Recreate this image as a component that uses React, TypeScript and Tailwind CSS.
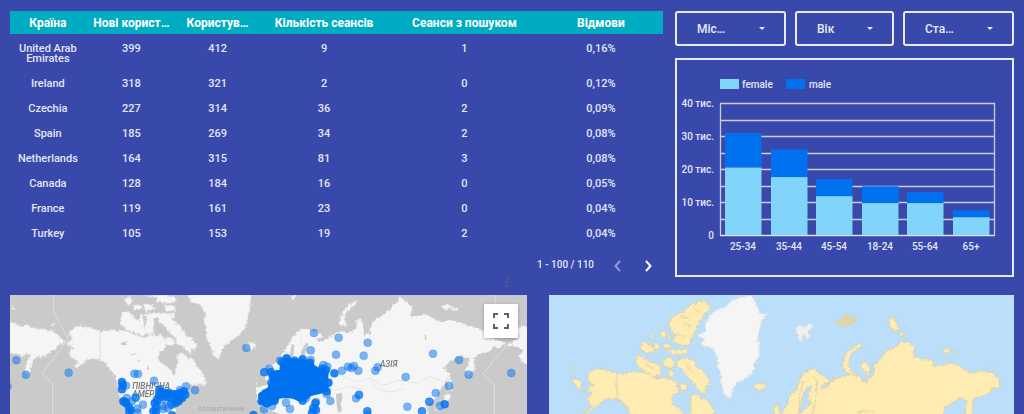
import React from "react";

const columns = [
  { label: "Країна", width: "w-[11.6%]" },
  { label: "Нові корист…", width: "w-[14%]" },
  { label: "Користув…", width: "w-[12.4%]" },
  { label: "Кількість сеансів", width: "w-[20.2%]" },
  { label: "Сеанси з пошуком", width: "w-[22.8%]" },
  { label: "Відмови", width: "w-[19%]" },
];

const rows = [
  ["United Arab Emirates", "399", "412", "9", "1", "0,16%"],
  ["Ireland", "318", "321", "2", "0", "0,12%"],
  ["Czechia", "227", "314", "36", "2", "0,09%"],
  ["Spain", "185", "269", "34", "2", "0,08%"],
  ["Netherlands", "164", "315", "81", "3", "0,08%"],
  ["Canada", "128", "184", "16", "0", "0,05%"],
  ["France", "119", "161", "23", "0", "0,04%"],
  ["Turkey", "105", "153", "19", "2", "0,04%"],
];

function CountryTable() {
  return (
    <section>
      <table className="w-full table-fixed border-collapse text-center text-[#e4e6f4]">
        <thead>
          <tr className="h-[23px] bg-[#00acc1]">
            {columns.map((c) => (
              <th key={c.label} className={`${c.width} whitespace-nowrap p-0 text-xs font-bold leading-4 text-white`}>
                {c.label}
              </th>
            ))}
          </tr>
        </thead>
        <tbody>
          {rows.map((row) => (
            <tr key={row[0]}>
              {row.map((cell, i) => (
                <td key={i} className="px-1 pb-[5px] pt-[10px] align-top text-[11px] font-medium leading-[10px]">
                  {cell}
                </td>
              ))}
            </tr>
          ))}
        </tbody>
      </table>
      <div className="mt-[13px] flex items-center justify-end pr-[7px] text-[10px] font-medium leading-4 text-[#e4e6f4]">
        <span className="mr-4">1 - 100 / 110</span>
        <button type="button" aria-label="Назад" disabled className="mr-[14px] text-[#8f99d6]">
          <Chevron d="M10 4 5.5 9l4.5 5" />
        </button>
        <button type="button" aria-label="Далі" className="text-white">
          <Chevron d="m6 4 4.5 5L6 14" />
        </button>
      </div>
    </section>
  );
}

function Chevron({ d }: { d: string }) {
  return (
    <svg viewBox="0 0 16 16" className="size-4" fill="none" stroke="currentColor" strokeWidth="2">
      <path d={d} />
    </svg>
  );
}

function Filter({ label, name }: { label: string; name: string }) {
  return (
    <div className="relative">
      <select
        aria-label={name}
        className="h-[35px] w-full appearance-none rounded-[3px] border-2 border-[#e8eaf6] bg-transparent pl-5 pr-8 text-xs font-medium text-[#e8eaf6]"
      >
        <option>{label}</option>
      </select>
      <svg viewBox="0 0 6 3" className="pointer-events-none absolute right-[21px] top-4 h-[3px] w-[6px]" fill="#e8eaf6">
        <path d="M0 0h6L3 3z" />
      </svg>
    </div>
  );
}

const ages = [
  { label: "25-34", x: 48, female: 20.5, total: 31 },
  { label: "35-44", x: 94, female: 17.6, total: 26 },
  { label: "45-54", x: 139, female: 11.8, total: 17 },
  { label: "18-24", x: 185, female: 9.7, total: 14.8 },
  { label: "55-64", x: 230, female: 9.7, total: 13 },
  { label: "65+", x: 276, female: 5.4, total: 7.5 },
];
const baseY = 175;
const perUnit = 3.29;

function AgeChart() {
  return (
    <section className="mt-3 border-2 border-[#e8eaf6]">
      <svg viewBox="0 0 335 215" className="block w-full font-medium" fill="#e4e6f4" fontSize="10">
        <rect x="43" y="19" width="19" height="10" fill="#81d4fa" />
        <text x="65" y="28">female</text>
        <rect x="109" y="19" width="19" height="10" fill="#0072f0" />
        <text x="132" y="28">male</text>
        <g stroke="#cbcddf" strokeWidth="1.3">
          {[0, 5, 10, 15, 20, 25, 30, 35, 40].map((v) => (
            <path key={v} d={`M43 ${Math.round(baseY - v * perUnit) + 0.5}H318`} />
          ))}
          <path d="M43.5 43V175M317.5 43V175" />
        </g>
        {[0, 10, 20, 30, 40].map((v) => (
          <text key={v} x="37" y={baseY - v * perUnit + 4} textAnchor="end">
            {v === 0 ? "0" : `${v} тис.`}
          </text>
        ))}
        {ages.map((a) => (
          <g key={a.label}>
            <rect x={a.x} y={baseY - a.total * perUnit} width="36.5" height={(a.total - a.female) * perUnit} fill="#0072f0" />
            <rect x={a.x} y={baseY - a.female * perUnit} width="36.5" height={a.female * perUnit} fill="#81d4fa" />
            <text x={a.x + 18} y="190" textAnchor="middle">{a.label}</text>
          </g>
        ))}
        <path d="M43 175.5H318" stroke="#dfe1ee" shapeRendering="crispEdges" />
      </svg>
    </section>
  );
}

const westDots = [
  [49, 229], [78, 272], [206, 266], [403, 269], [414, 270], [462, 290], [558, 307], [585, 319], [739, 192],
  [792, 265], [22, 307], [378, 305], [429, 362], [407, 340], [407, 342], [396, 352], [412, 374], [380, 342],
  [540, 318], [512, 362], [498, 350], [486, 366], [504, 372], [516, 362], [470, 345], [490, 375], [412, 386],
];
const westSolid = [
  [366, 294], [368, 304], [366, 316], [370, 352], [378, 358], [386, 368], [392, 378], [376, 354], [388, 384],
  [478, 317], [484, 324], [496, 328], [506, 326], [518, 330], [530, 330], [542, 326], [552, 322], [556, 332],
  [546, 342], [536, 352], [526, 358], [514, 342], [500, 338], [486, 338], [472, 350], [464, 358], [468, 370],
  [460, 382], [540, 338], [526, 344], [478, 334], [760, 393], [516, 394], [468, 384],
];
const eastDots = [
  [162, 147], [236, 161], [323, 176], [152, 199], [228, 212], [311, 215], [519, 209], [597, 228], [626, 272],
  [754, 267], [437, 279], [567, 306], [527, 327], [442, 368], [540, 366], [246, 260], [264, 248], [282, 246],
  [274, 252], [295, 260], [346, 260], [353, 250], [297, 332], [297, 334], [288, 343], [211, 351], [90, 375],
  [78, 356], [14, 265], [28, 254], [60, 230], [80, 222], [152, 228], [190, 243], [202, 248], [168, 354], [12, 376],
  [200, 330], [206, 296], [150, 240], [508, 353], [508, 353], [486, 382], [486, 382], [322, 382], [322, 382], [322, 392],
  [36, 366], [138, 342],
];
const eastSolid = [
  [554, 361], [223, 268], [80, 224], [104, 230], [128, 226], [66, 234], [150, 236], [186, 254], [198, 258],
  [32, 264], [38, 276], [34, 296], [204, 296], [200, 322], [166, 358], [160, 372], [168, 378], [156, 386],
  [128, 350], [20, 358], [4, 352], [6, 336], [16, 328], [28, 324], [44, 350],
];

function Dots({ points, opacity }: { points: number[][]; opacity: number }) {
  return (
    <g fill="#0072f0" fillOpacity={opacity} stroke="#0072f0" strokeOpacity={opacity * 0.7} strokeWidth="2">
      {points.map(([x, y], i) => (
        <circle key={i} cx={x} cy={y} r="12" />
      ))}
    </g>
  );
}

function CoastFilter({ id, scale }: { id: string; scale: number }) {
  return (
    <filter id={id} x="-5%" y="-5%" width="110%" height="110%">
      <feTurbulence type="fractalNoise" baseFrequency="0.12" numOctaves="2" seed="4" />
      <feDisplacementMap in="SourceGraphic" scale={scale} xChannelSelector="R" yChannelSelector="G" />
    </filter>
  );
}

function VisitorsMap() {
  return (
    <section className="relative overflow-hidden">
      <svg viewBox="30 33 1551 357" className="block w-full overflow-hidden bg-[#cacaca]" role="img" aria-label="Карта сеансів">
        <defs>
          <CoastFilter id="coast-grey" scale={14} />
        </defs>
        <g filter="url(#coast-grey)" fill="#f5f5f5">
          <path d="M20 110l22 6 6 8 18 3 16-5 13 9 23 3 32 5 10 3 15 13 10 10 10 7-7 10-10-4-10 14-13 6-10 14-15 4-10 6-5-8-15 14-8 20-5 28-12-12 2-28 15-18-7-10-18 10-15-10H20z" />
          <path d="M150 124l10-5 6 4-8 5zM34 70l10 0 4 7-10 0z" />
          <path d="M208 140l17-10 15-5 15 3 20 4 15 6 10 4 20-2 20-4 12 6 13-4 15 4 20 8 20 8 20 2 15-10 15 8 10-8 12 10 8 18-8 17-12 10-6 17 6 13 17 8 15 15 6 14 9-2-1-20 8-15-3-20 13-10 13 7 7 13 13-3 12 23 15 17 13 23-18 15-15 2-15 3-10 20-15 20-15 25-10 40H385l-10-40-15-30-8-40-7-25-15-20-18-23-22-8-20 1-20 10-17 17-12-2 17-18-18-7-10-10-2-15 15-10-15-5-10-5 12-12 10-3-12-10z" />
          <path d="M600 302l8-16 14 12-2 7zM365 85l20-2 14 14 16 13 8-22 10 24-3 18 16 12-15 13-22-8-24-8-23-18zM435 128l8-26 14-8 6 20-2 32-14 6zM470 90l30 5 20 15 25 20 10 20 20 15 15 15-5 20-15-5 5 16-15-10-15-16-15-4-5-20-15-15-15-20-15-10zM498 160l16 0 12 16-12 10-16-8zM372 44l18-6 8 18-14 8zM398 66l20-6 10 12-24 8zM428 62l26 0 14 12-30 8zM436 33h60l30 8 4 12-30 6-30-8 0-10-30-6zM490 62l36 4 2 14-30 0zM425 92l40-6 60 4 -2 12-30 2-50-2z" />
          <path d="M560 25h194l-2 30-8 45-5 30-24 25-25 17-18 13-10 20-7 18-10-3-13-30-10-25-4-30-6-25 6-20-18-30-25-5z" />
          <path d="M738 178l14-3 16 3 1 11-15 8-14-4z" />
          <g transform="translate(780 0)">
            <path d="M60 230l2-15 18-25 15-25 15-20 20-12 25 7 30 10 5 15-20-5 5 15 20-7 20-13 20-10 15-5 15 8 25-13-2-25 12-8 8 18 7 30 20 0-5-20 10-20 25-15 25-20 20-17 8-22 22 19 18 15-8 25 30 0 20-5 20 15 25 10 25-7 30 7 25 10 25 5 30 15 20 20 35 10-15 20-20-7-10 12-30 10-20 15 5 30-20 20-10-13 15-37-30-10-30 15-20 20 15 15-5 25-20 25-10 25-15 10-15 20 5 30H-10V250l40-5 20-10z" />
            <path d="M237 122l8-32 20-28 30-14-10 14-23 18-10 25 10 22zM92 36l16-3-6 18zM545 66l22-6 8 10-18 10zM574 68l20 4-4 8-14-2zM564 262l8 24 4 34-10 0-4-30zM556 330l16 4-2 12-16 22-30 12 4-10 22-12zM765 132l40-8v118l-18-6-12-20 15-16-15-12-20-2-18 0 24-14 18-10z" />
          </g>
        </g>
        <g transform="translate(780 0)" fill="#cacaca">
          <path d="M-10 240l36 0-12 40 12 20-30 10 -6 0zM-10 360l30 14 40 16H-10z" />
          <path d="M138 176l8 4-8 22-6 18-12 4 4-24zM95 180l8 4-3 36-12 6 4-24z" />
          <path d="M310 100l5 0 2 50-5 8zM494 152l4 0 1 16-4 0zM228 330l16-4 4 14-6 20 4 20-12 6-4-24z" />
        </g>
        <g fill="#cacaca">
          <path d="M362 176l22-4-8 6 8 4-18 2zM390 212l22-6-14 8zM412 230l12-2-8 6zM440 256l6-12 2 14z" />
        </g>
        <g fill="none" stroke="#dedede" strokeWidth="3">
          <path d="M160 33v47l45 85-80 103 33 32v90M300 142v84l20 14M1485 33v40M1520 185l-72 85 35 30v90" />
          <path d="M980 290l40-18 50 22 40-12 40 22 50-16 50 10 40-20 40 14 30 26M1110 290l20 24 40 10 40-10M1000 320l50-14 40 14M940 190l0 40M900 160l10 34" strokeWidth="2" />
        </g>
        <g fill="#767676" fontSize="25" fontStyle="italic" fontWeight="500">
          <text x="397" y="315">ПІВНІЧНА</text>
          <text x="397" y="339">АМЕРИКА</text>
          <text x="1140" y="250">АЗІЯ</text>
        </g>
        <text x="593" y="381" fontSize="23" fill="#a6a6a6">Атлантичний</text>
        <Dots points={westDots} opacity={0.5} />
        <Dots points={westSolid} opacity={0.85} />
        <g transform="translate(780 0)">
          <path
            d="M34 268L64 262 66 240 80 228 105 230 130 230 150 240 175 258 192 256 200 268 198 290 200 318 178 324 152 330 140 340 120 348 100 338 75 336 56 338 44 354 20 364 2 354 4 332 28 314 36 296z"
            fill="#0072f0" stroke="#0072f0" strokeWidth="12" strokeLinejoin="round"
          />
          <Dots points={eastDots} opacity={0.5} />
          <Dots points={eastSolid} opacity={0.85} />
        </g>
      </svg>
      <button
        type="button"
        aria-label="На весь екран"
        className="absolute right-[9px] top-[9px] flex size-[34px] items-center justify-center bg-white shadow-[0_1px_3px_rgba(0,0,0,0.3)]"
      >
        <svg viewBox="0 0 16 16" className="size-4" fill="none" stroke="#606060" strokeWidth="2">
          <path d="M1 5V1h4M11 1h4v4M15 11v4h-4M5 15H1v-4" />
        </svg>
      </button>
    </section>
  );
}

function RegionMap() {
  return (
    <section>
      <svg viewBox="28 33 1395 357" className="block w-full overflow-hidden bg-[#bbdefb]" role="img" aria-label="Карта країн">
        <defs>
          <CoastFilter id="coast-warm" scale={14} />
        </defs>
        <g filter="url(#coast-warm)" fill="#ffecb3" stroke="#d9cfa8" strokeWidth="3" strokeLinejoin="round">
          <path d="M142 275l10-13 26-10 22 6 32 10 18 2 25-8 25 3 25 3 25 17 25-3 25 6 15 12-5 12 15 13-20 5-10 15 5 17 20 10 15 30H275l-13-32-12-15-15-10h-20l-25 5-10 10-20 15-20 13-8-3 28-17-10-10-8-13 8-10 8-10-16-7 8-10 15-6-15-4z" />
          <path d="M232 268v78l20 12 24 40" fill="none" />
          <path d="M455 400l-3-65 18-7 15 17h15l15 20 18 35zM95 278l20 10 13 10-6 17-17-10zM94 250l6-2 2 6-6 2zM128 318l6 6-6 2z" />
          <path d="M290 212l20 6 15 14 20 3 20 15-3 22-22 6-20-13-20-15-12-10zM370 228l25-10 10 22-14 14-20-8zM380 262l14-6 12 14-14 10zM412 225l28-3 22 6 8 17 20 17 18 23 2 15-15 10 5 20-20-5-15-25-15-15-20-25-18-12zM425 292l16 12 2 14-14 2-10-14z" />
          <path d="M440 75l20-17 25-8 20 8 7 14-17 18-10 15-15 25-10 25-8 20-12 10-25-3-15-12 5-15-10-15-7-20 7-20 25-12z" />
          <path d="M378 195l42 3 25-5-3 17-42 2zM300 190l15-18 15 10 15 13-10 13-25-5zM328 155l10-8 2 12-10 8zM358 145l14-4 10 14-12 8zM368 180l20-2 4 12-18 4zM340 178l14-2 8 18-14 6zM376 124l6-2 0 8-6 0zM384 152l10 4-2 10-8-4z" />
          <path d="M420 96l30 6M432 118l20 8M462 72l20 14M404 150l30 6M316 240l26 14M440 240l20 24M396 284l12 12" fill="none" />
          <path d="M640 303l15-5 23 2-3 15-20 5zM700 400l5-38 10-4 3 22 7 20z" />
          <path d="M472 155l28-15-5-15 15-30 20-20 30-7 15-18 25-12 35-2 15 19 10 30 25 7-20 18-3 20-7 30 5 25-2 30-13 25-5 25-25 20-25 15-12 20-3 22h-15l-10-20-8-27 3-25-10-20-5-35-10-20-25-7-15-8 15-15z" fill="#f5f5f5" stroke="#d5dbe0" />
          <g transform="translate(720 0)">
            <path d="M0 400l25-45 3-20 22-15 10-35 15-20 25-13 20 16 28 17-3 13-15 2-8 10 23 2 5-17 25-13 40-12 25 8 8 12 14 8 3-28-20-15 5-25 12 5 8 20-2 30 17-15-5-30 18-5 12-20 10-15 25-10 20-18 20 3 20 15-5 25 30 10h25l7 20h28l20-10 30 10 30 23 30-6 35 3 20 15 7 25-7 10-15-5-15 20-25 8-20 4v33l-10 25h-15l5-50-15-8-25 13-25 15-5 30z" />
            <path d="M190 250l2-25 13-27 35-20 8 6-33 24-10 27 10 25 20 12-14 0-20-8zM330 105l15-7 5 20 8 17-13 10-17-20zM358 145l12 0 8 10-16 3zM485 195l20-3 10 10-20 6zM520 203l14 0-2 6-10 0zM500 222l8 2-4 6zM636 250l8-1 0 6-8 0zM160 282l8 2-4 8z" />
            <path d="M165 115l20-10 20-15 10 10 20 5-20 15-25 5z" fill="#e4d6a0" />
            <path d="M45 130l20-8 10 8 10-10h15l-2 12-13 6 5 27h-8l-10-15-4 28-13-13-5-20z" fill="#f0f0f0" stroke="#d5dbe0" />
            <path d="M70 330l16-22 10 0-14 30 10 12-8 18-14 14-10 4-2-12 10-20z" fill="#bbdefb" />
            <path d="M100 275l12 20-4 45M72 290l-12 40-2 60M92 350l14 30M108 350l-10 40M235 384l30-4 20 6" fill="none" />
          </g>
        </g>
      </svg>
    </section>
  );
}

export default function App() {
  return (
    <main className="min-h-screen bg-[#3949ab] px-[10px] pt-[11px] font-['Roboto','Noto_Sans',sans-serif]">
      <div className="grid grid-cols-[653fr_339fr] gap-3">
        <CountryTable />
        <div>
          <div className="grid grid-cols-[111fr_99fr_111fr] gap-[9px]">
            <Filter label="Міс…" name="Місто" />
            <Filter label="Вік" name="Вік" />
            <Filter label="Ста…" name="Стать" />
          </div>
          <AgeChart />
        </div>
      </div>
      <div className="grid grid-cols-[517fr_465fr] items-end gap-[22px]">
        <div>
          <div className="flex justify-end pb-2 pr-[17px]">
            <button type="button" aria-label="Меню" className="block">
              <svg viewBox="0 0 6 10" className="h-[10px] w-[6px]" fill="#555a78">
                <circle cx="3" cy="1.3" r="1.3" />
                <circle cx="3" cy="5" r="1.3" />
                <circle cx="3" cy="8.7" r="1.3" />
              </svg>
            </button>
          </div>
          <VisitorsMap />
        </div>
        <RegionMap />
      </div>
    </main>
  );
}
